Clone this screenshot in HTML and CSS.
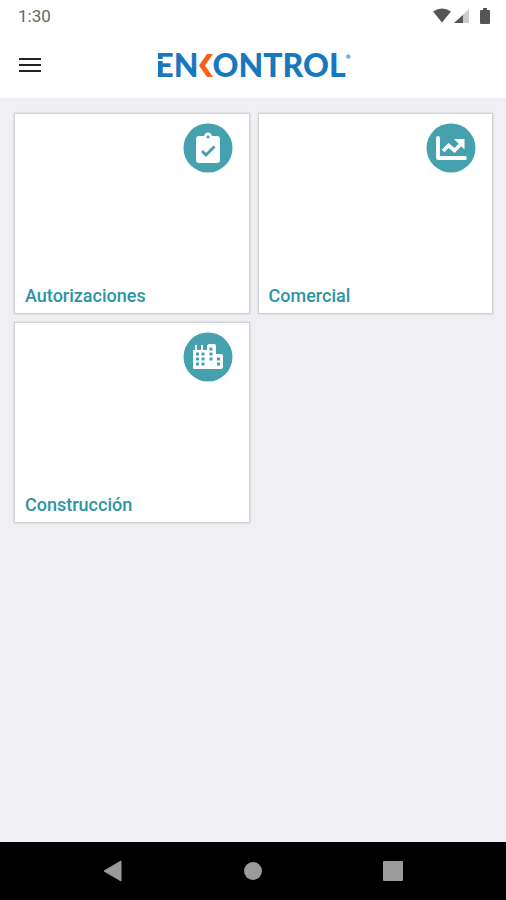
FILE: index.html
```html
<!DOCTYPE html>
<html lang="es">
<head>
<meta charset="utf-8">
<meta name="viewport" content="width=device-width, initial-scale=1">
<title>Enkontrol</title>
<link rel="stylesheet" href="styles.css">
</head>
<body>
<div class="status-bar">
  <span>1:30</span>
  <div class="status-icons">
    <svg width="20" height="16" viewBox="0 0 20 16" aria-hidden="true"><path d="M1 3.500Q10-2.500 19 3.500L10 14.500Z" fill="#555"/></svg>
    <svg width="16" height="16" viewBox="0 0 16 16" aria-hidden="true"><path d="M0 15L15 1V15Z" fill="#ccc"/><path d="M0 15L9 7V15Z" fill="#555"/></svg>
    <svg width="10" height="16" viewBox="0 0 10 16" aria-hidden="true"><path d="M3 0h4v2h2q1 0 1 1v12q0 1-1 1H1q-1 0-1-1V3q0-1 1-1h2Z" fill="#555"/></svg>
  </div>
</div>
<header class="app-header">
  <button class="menu-button" type="button" aria-label="Menú">
    <svg width="22" height="16" viewBox="0 0 22 16" aria-hidden="true"><path d="M0 2h22M0 8h22M0 14h22" stroke="#222" stroke-width="2.200"/></svg>
  </button>
  <div class="logo">
    <span class="logo-split">E</span><span>N</span>
    <svg class="logo-mark" width="14" height="23" viewBox="0 0 14 23" aria-hidden="true"><path d="M8 0h6L6 11.500L14 23H8L0 11.500Z" fill="#fb6118"/></svg>
    <span>ONTROL</span><span class="logo-reg">®</span>
  </div>
</header>
<main class="modules">
  <a class="card" href="#autorizaciones">
    <svg class="card-icon" width="50" height="50" viewBox="0 0 50 50" aria-hidden="true">
      <circle cx="25" cy="25" r="24.500" fill="#46a1af"/>
      <path d="M16 13h5q1-3.500 4-3.500t4 3.500h5q3 0 3 3v21q0 3-3 3H16q-3 0-3-3V16q0-3 3-3Z" fill="#fff"/>
      <circle cx="25" cy="14" r="1.500" fill="#46a1af"/>
      <path d="M19 28l4 4 8.500-8.500" fill="none" stroke="#46a1af" stroke-width="2.900"/>
    </svg>
    <span class="card-title">Autorizaciones</span>
  </a>
  <a class="card" href="#comercial">
    <svg class="card-icon" width="50" height="50" viewBox="0 0 50 50" aria-hidden="true">
      <circle cx="25" cy="25" r="24.500" fill="#46a1af"/>
      <path d="M12 15v20h27" fill="none" stroke="#fff" stroke-width="3.800" stroke-linecap="round" stroke-linejoin="round"/>
      <path d="M17 28l5.500-5.500 6 5L35 21" fill="none" stroke="#fff" stroke-width="3.600"/>
      <path d="M28 16h10.500v10.500Z" fill="#fff"/>
    </svg>
    <span class="card-title">Comercial</span>
  </a>
  <a class="card" href="#construccion">
    <svg class="card-icon" width="50" height="50" viewBox="0 0 50 50" aria-hidden="true">
      <circle cx="25" cy="25" r="24.500" fill="#46a1af"/>
      <path d="M10 36V18h2v-5h2v5h4v-5h2v5h4v-5h1v0q0-1 1-1h5q2 0 2 2v8h5q2 0 2 2V35q0 2-2 2H11q-1 0-1-1Z" fill="#fff"/>
      <path d="M13 20.500h3v3h-3zM18.500 20.500h3v3h-3zM13 25.500h3v3h-3zM18.500 25.500h3v3h-3zM13 30.500h3v3h-3zM18.500 30.500h3v3h-3zM26.500 15.500h3v3h-3zM26.500 20.500h3v3h-3zM26.500 25.500h3v3h-3zM34 25.500h3v3h-3zM34 30.500h3v3h-3z" fill="#46a1af"/>
    </svg>
    <span class="card-title">Construcción</span>
  </a>
</main>
<nav class="system-nav" aria-label="Sistema">
  <button type="button" aria-label="Atrás"><svg width="20" height="22" viewBox="0 0 20 22" aria-hidden="true"><path d="M1 11L18 1V21Z" fill="#9b9b9b" stroke="#9b9b9b" stroke-linejoin="round"/></svg></button>
  <button type="button" aria-label="Inicio"><svg width="20" height="20" viewBox="0 0 20 20" aria-hidden="true"><circle cx="10" cy="10" r="9" fill="#9b9b9b"/></svg></button>
  <button type="button" aria-label="Recientes"><svg width="20" height="20" viewBox="0 0 20 20" aria-hidden="true"><rect width="20" height="20" rx="1" fill="#9b9b9b"/></svg></button>
</nav>
</body>
</html>
```

FILE: styles.css
```css
* {
  box-sizing: border-box;
}

body {
  display: flex;
  flex-direction: column;
  min-height: 100vh;
  margin: 0;
  background: #efeff4;
  font-family: Roboto, "Liberation Sans", sans-serif;
}

button {
  display: flex;
  align-items: center;
  justify-content: center;
  padding: 0;
  border: 0;
  background: none;
}

.status-bar {
  display: flex;
  align-items: center;
  justify-content: space-between;
  height: 32px;
  padding: 0 16px 0 18px;
  background: #fff;
  color: #666;
  font-size: 17px;
}

.status-icons {
  display: flex;
  align-items: center;
}

.status-icons svg:nth-child(2) {
  margin: 0 10px 0 2px;
}

.app-header {
  display: grid;
  grid-template-columns: 60px 1fr 60px;
  align-items: center;
  height: 66px;
  background: #fff;
}

.menu-button {
  width: 60px;
  height: 48px;
}

.logo {
  display: flex;
  align-items: center;
  justify-content: center;
  color: #1878be;
  font-family: Lato, "Liberation Sans", sans-serif;
  font-size: 32px;
  font-weight: 900;
  line-height: 40px;
}

.logo-split {
  background: linear-gradient(#1878be 0 14px, #fff 14px 16px, #1878be 16px);
  background-clip: text;
  color: transparent;
}

.logo-reg {
  align-self: flex-start;
  font-size: 6px;
  line-height: 24px;
}

.modules {
  display: grid;
  flex: 1;
  grid-template-columns: 1fr 1fr;
  align-content: start;
  gap: 8px;
  padding: 15px 13px 15px 14px;
}

.card {
  display: flex;
  flex-direction: column;
  justify-content: space-between;
  height: 201px;
  padding: 9px 10px 7px;
  border: 1px solid #d2d2d6;
  background: #fff;
  box-shadow: 0 0 2px #c8c8cc;
  color: #2b95a3;
  text-decoration: none;
}

.card-icon {
  align-self: flex-end;
  margin-right: 6px;
}

.card-title {
  font-size: 18px;
  font-weight: 500;
  line-height: 20px;
}

.system-nav {
  display: flex;
  justify-content: center;
  gap: 92px;
  height: 58px;
  background: #000;
}

.system-nav button {
  width: 48px;
}
```
